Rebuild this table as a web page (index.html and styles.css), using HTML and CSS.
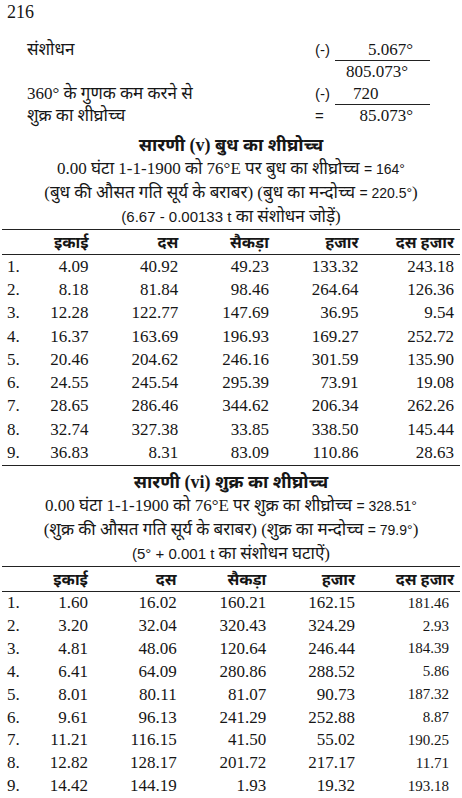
FILE: index.html
```html
<!DOCTYPE html>
<html lang="hi">
<head>
    <meta charset="UTF-8">
    <meta name="viewport" content="width=device-width, initial-scale=1.0">
    <title>216</title>
    <link rel="stylesheet" href="styles.css">
</head>
<body>
    <div class="page">
        <div class="folio">216</div>

        <!-- Correction working -->
        <div class="calc">
            <div class="calc-row">
                <span class="calc-label">संशोधन</span>
                <span class="calc-sign">(-)</span>
                <span class="calc-val ruled">5.067°</span>
            </div>
            <div class="calc-row">
                <span class="calc-label"></span>
                <span class="calc-sign"></span>
                <span class="calc-val shift">805.073°</span>
            </div>
            <div class="calc-row">
                <span class="calc-label">360° के गुणक कम करने से</span>
                <span class="calc-sign">(-)</span>
                <span class="calc-val ruled left">720</span>
            </div>
            <div class="calc-row">
                <span class="calc-label">शुक्र का शीघ्रोच्च</span>
                <span class="calc-sign">=</span>
                <span class="calc-val">85.073°</span>
            </div>
        </div>

        <!-- Table v -->
        <div class="table-head first">
            <h2>सारणी (v) बुध का शीघ्रोच्च</h2>
            <p>0.00 घंटा 1-1-1900 को 76°E पर बुध का शीघ्रोच्च <span class="eq">= 164°</span></p>
            <p>(बुध की औसत गति सूर्य के बराबर) (बुध का मन्दोच्च <span class="eq">= 220.5°</span>)</p>
            <p><span class="sans">(6.67 - 0.00133 t</span> का संशोधन जोड़ें)</p>
        </div>
        <table class="data">
            <thead>
                <tr><th></th><th>इकाई</th><th>दस</th><th>सैकड़ा</th><th>हजार</th><th>दस हजार</th></tr>
            </thead>
            <tbody>
                <tr><td>1.</td><td>4.09</td><td>40.92</td><td>49.23</td><td>133.32</td><td>243.18</td></tr>
                <tr><td>2.</td><td>8.18</td><td>81.84</td><td>98.46</td><td>264.64</td><td>126.36</td></tr>
                <tr><td>3.</td><td>12.28</td><td>122.77</td><td>147.69</td><td>36.95</td><td>9.54</td></tr>
                <tr><td>4.</td><td>16.37</td><td>163.69</td><td>196.93</td><td>169.27</td><td>252.72</td></tr>
                <tr><td>5.</td><td>20.46</td><td>204.62</td><td>246.16</td><td>301.59</td><td>135.90</td></tr>
                <tr><td>6.</td><td>24.55</td><td>245.54</td><td>295.39</td><td>73.91</td><td>19.08</td></tr>
                <tr><td>7.</td><td>28.65</td><td>286.46</td><td>344.62</td><td>206.34</td><td>262.26</td></tr>
                <tr><td>8.</td><td>32.74</td><td>327.38</td><td>33.85</td><td>338.50</td><td>145.44</td></tr>
                <tr><td>9.</td><td>36.83</td><td>8.31</td><td>83.09</td><td>110.86</td><td>28.63</td></tr>
            </tbody>
        </table>

        <!-- Table vi -->
        <div class="table-head">
            <h2>सारणी (vi) शुक्र का शीघ्रोच्च</h2>
            <p>0.00 घंटा 1-1-1900 को 76°E पर शुक्र का शीघ्रोच्च <span class="eq">= 328.51°</span></p>
            <p>(शुक्र की औसत गति सूर्य के बराबर) (शुक्र का मन्दोच्च <span class="eq">= 79.9°</span>)</p>
            <p><span class="sans">(5° + 0.001 t</span> का संशोधन घटाऐं)</p>
        </div>
        <table class="data second">
            <thead>
                <tr><th></th><th>इकाई</th><th>दस</th><th>सैकड़ा</th><th>हजार</th><th>दस हजार</th></tr>
            </thead>
            <tbody>
                <tr><td>1.</td><td>1.60</td><td>16.02</td><td>160.21</td><td>162.15</td><td>181.46</td></tr>
                <tr><td>2.</td><td>3.20</td><td>32.04</td><td>320.43</td><td>324.29</td><td>2.93</td></tr>
                <tr><td>3.</td><td>4.81</td><td>48.06</td><td>120.64</td><td>246.44</td><td>184.39</td></tr>
                <tr><td>4.</td><td>6.41</td><td>64.09</td><td>280.86</td><td>288.52</td><td>5.86</td></tr>
                <tr><td>5.</td><td>8.01</td><td>80.11</td><td>81.07</td><td>90.73</td><td>187.32</td></tr>
                <tr><td>6.</td><td>9.61</td><td>96.13</td><td>241.29</td><td>252.88</td><td>8.87</td></tr>
                <tr><td>7.</td><td>11.21</td><td>116.15</td><td>41.50</td><td>55.02</td><td>190.25</td></tr>
                <tr><td>8.</td><td>12.82</td><td>128.17</td><td>201.72</td><td>217.17</td><td>11.71</td></tr>
                <tr><td>9.</td><td>14.42</td><td>144.19</td><td>1.93</td><td>19.32</td><td>193.18</td></tr>
            </tbody>
        </table>
    </div>
</body>
</html>
```

FILE: styles.css
```css
body {
    margin: 0;
    background-color: #ffffff;
    color: #161616;
    font-family: "Liberation Serif", "Noto Sans", serif;
    font-size: 17px;
}
.page {
    width: 462px;
    overflow: hidden;
}
.folio {
    height: 24px;
    line-height: 24px;
    padding-left: 7px;
    font-size: 18px;
}
/* Correction working */
.calc {
    padding-top: 15px;
}
.calc-row {
    display: flex;
    height: 22px;
    line-height: 22px;
}
.calc-label {
    flex: 1;
    padding-left: 27px;
}
.calc-sign {
    width: 20px;
    font-family: "Liberation Sans", sans-serif;
    font-size: 15px;
}
.calc-val {
    width: 95px;
    margin-right: 32px;
    box-sizing: border-box;
    padding-right: 17px;
    text-align: right;
    font-size: 17px;
}
.calc-val.ruled {
    border-bottom: 1.5px solid #222;
}
.calc-val.shift {
    padding-right: 22px;
}
.calc-val.left {
    text-align: left;
    padding-left: 18px;
}
/* Table titles */
.table-head {
    text-align: center;
    padding-top: 4px;
}
.table-head.first {
    padding-top: 6px;
}
.table-head h2 {
    margin: 0;
    font-size: 18px;
    line-height: 24px;
    font-weight: bold;
}
.table-head p {
    margin: 0;
    line-height: 24px;
}
.eq {
    font-family: "Liberation Sans", sans-serif;
    font-size: 14px;
}
.sans {
    font-family: "Liberation Sans", sans-serif;
    font-size: 15px;
}
/* Data tables */
.data {
    width: 458px;
    margin-left: 2px;
    border-collapse: collapse;
    border-top: 1.5px solid #222;
}
.data th {
    height: 24px;
    padding: 0;
    font-size: 16px;
    font-weight: bold;
    text-align: right;
    border-bottom: 1.5px solid #222;
}
.data td {
    height: 23.3px;
    padding: 0;
    text-align: right;
}
.data th:nth-child(1), .data td:nth-child(1) { width: 45px; text-align: left; padding-left: 5px; }
.data th:nth-child(2), .data td:nth-child(2) { width: 38px; }
.data th:nth-child(3), .data td:nth-child(3) { width: 92px; }
.data th:nth-child(4), .data td:nth-child(4) { width: 93px; }
.data th:nth-child(5), .data td:nth-child(5) { width: 92px; }
.data th:nth-child(6), .data td:nth-child(6) { width: 98px; padding-right: 6px; }
.data:not(.second) {
    border-bottom: 1.5px solid #222;
}
.data.second td {
    height: 22.9px;
}
.data.second td:nth-child(6) {
    font-size: 15px;
    padding-right: 11px;
}
```
